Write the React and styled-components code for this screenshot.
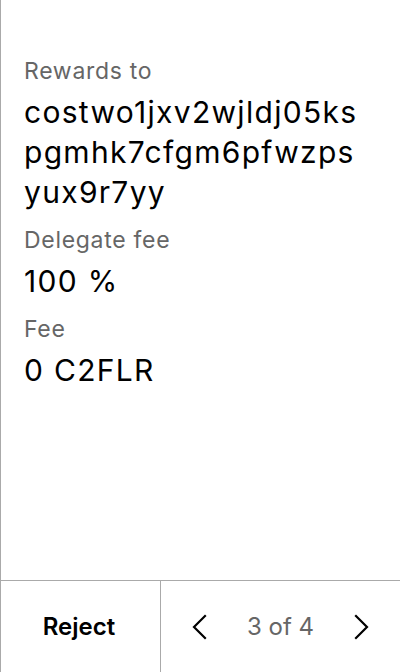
import React from "react";
import styled, { createGlobalStyle } from "styled-components";

const GlobalStyle = createGlobalStyle`
  html, body {
    margin: 0;
    padding: 0;
    background: #fff;
  }
  * {
    box-sizing: border-box;
  }
`;

// ---- Layout ----
const Screen = styled.div`
  width: 400px;
  height: 672px;
  display: flex;
  flex-direction: column;
  border-left: 1px solid #aaa;
  font-family: Inter, "Noto Sans", sans-serif;
  color: #000;
`;

const Details = styled.div`
  flex: 1;
  padding: 57px 42px 0 23px;
`;

const Field = styled.div`
  & + & {
    margin-top: 14px;
  }
`;

const Label = styled.div`
  font-size: 23px;
  line-height: 28px;
  letter-spacing: 0.7px;
  color: #666;
  margin-bottom: 7px;
`;

const Value = styled.div`
  font-size: 30px;
  line-height: 40px;
  letter-spacing: 1.3px;
  word-break: break-all;
`;

// ---- Footer ----
const Footer = styled.div`
  height: 92px;
  display: flex;
  border-top: 1px solid #aaa;
`;

const RejectButton = styled.button`
  width: 160px;
  border: none;
  border-right: 1px solid #aaa;
  background: transparent;
  font-family: inherit;
  font-size: 24px;
  font-weight: 600;
  color: #000;
  cursor: pointer;
  padding: 0 3px 0 0;
`;

const Pager = styled.div`
  flex: 1;
  display: flex;
  align-items: center;
  justify-content: center;
  gap: 36px;
`;

const NavButton = styled.button`
  width: 24px;
  height: 24px;
  padding: 0;
  border: none;
  background: transparent;
  display: flex;
  align-items: center;
  justify-content: center;
  cursor: pointer;
`;

const Counter = styled.span`
  font-size: 24px;
  color: #666;
`;

const Chevron = ({ dir }) => (
  <svg width="16" height="26" viewBox="0 0 16 26" fill="none">
    <path
      d={dir === "left" ? "M14 2 3 13l11 11" : "M2 2l11 11L2 24"}
      stroke="#000"
      strokeWidth="2.2"
      strokeLinecap="square"
    />
  </svg>
);

const fields = [
  { label: "Rewards to", value: "costwo1jxv2wjldj05kspgmhk7cfgm6pfwzpsyux9r7yy" },
  { label: "Delegate fee", value: "100 %" },
  { label: "Fee", value: "0 C2FLR" },
];

export default function App() {
  return (
    <>
      <GlobalStyle />
      <Screen>
        <Details>
          {fields.map((f) => (
            <Field key={f.label}>
              <Label>{f.label}</Label>
              <Value>{f.value}</Value>
            </Field>
          ))}
        </Details>
        <Footer>
          <RejectButton>Reject</RejectButton>
          <Pager>
            <NavButton>
              <Chevron dir="left" />
            </NavButton>
            <Counter>3 of 4</Counter>
            <NavButton>
              <Chevron dir="right" />
            </NavButton>
          </Pager>
        </Footer>
      </Screen>
    </>
  );
}
